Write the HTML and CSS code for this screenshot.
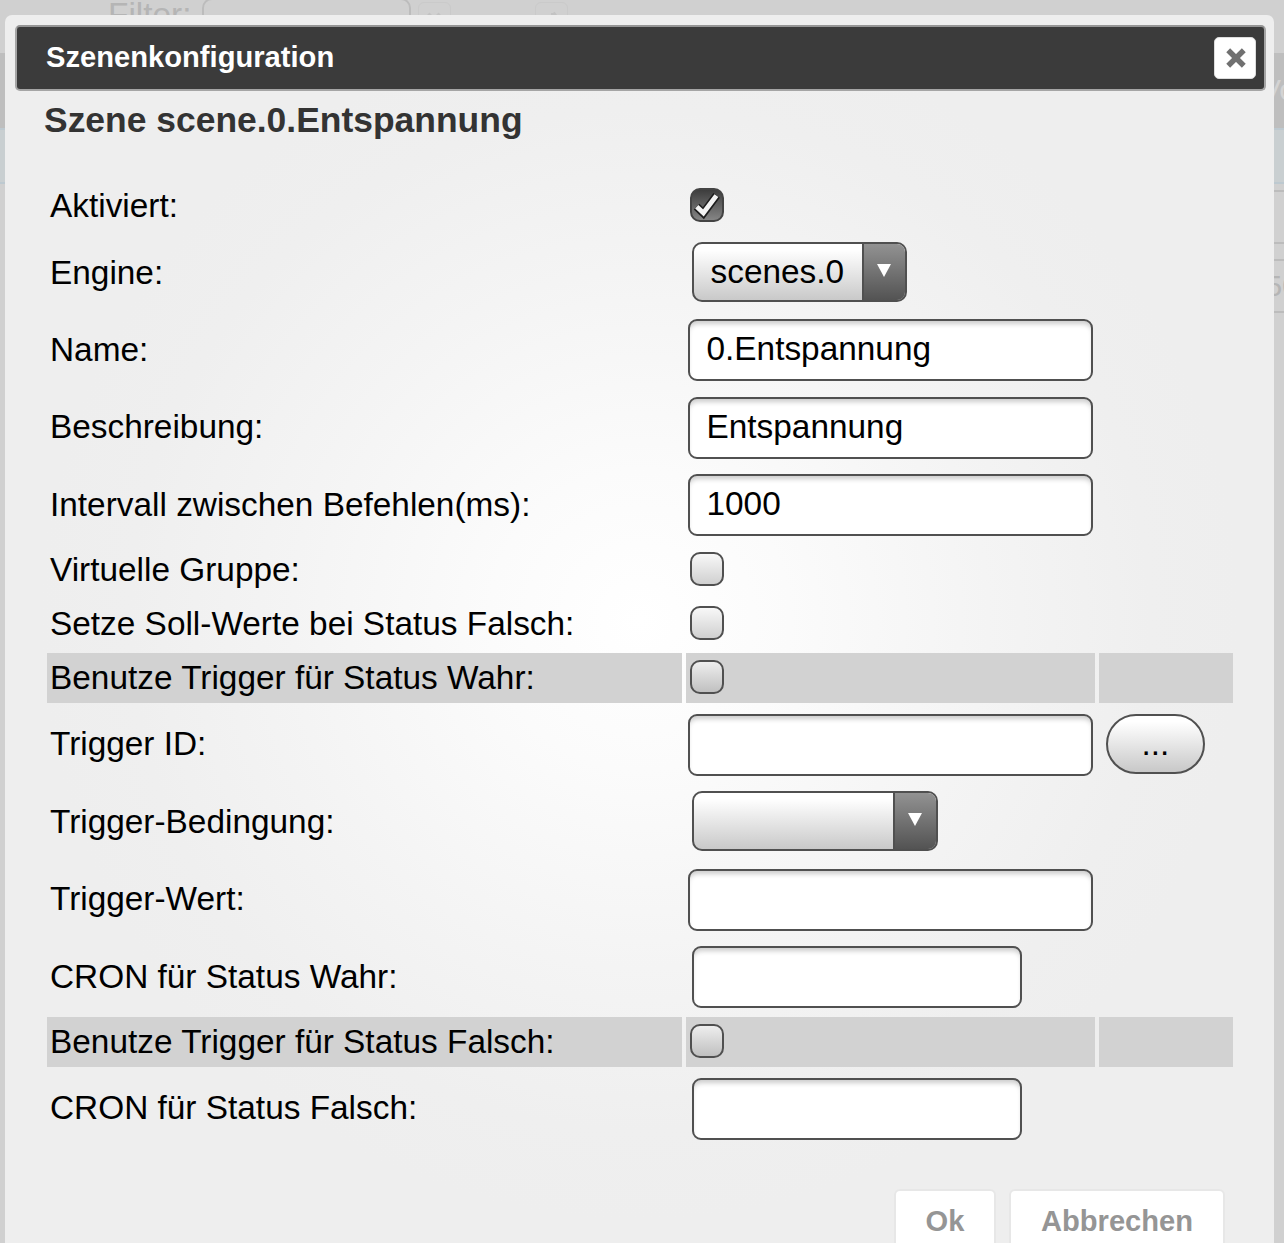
FILE: index.html
```html
<!DOCTYPE html>
<html lang="de">
<head>
<meta charset="utf-8">
<title>Szenenkonfiguration</title>
<link rel="stylesheet" href="styles.css">
</head>
<body>
<div class="backdrop">
  <div class="toolbar"><span class="filter-label">Filter:</span><span class="filter-box"></span><span class="tool-button"><svg viewBox="0 0 20 20"><path d="M4 4L16 16M16 4L4 16"/></svg></span><span class="tool-button second"><svg viewBox="0 0 20 20"><path d="M12 3V14L4 16M12 3L15 7"/></svg></span></div>
  <div class="table-head"><span>Vo</span></div>
  <div class="table-active"></div>
  <div class="side-field"></div>
  <div class="side-field filled">50</div>
</div>
<main class="dialog">
  <header class="titlebar">
    <span>Szenenkonfiguration</span>
    <button class="close" aria-label="Schließen"><svg viewBox="0 0 20 20"><path d="M4 4L16 16M16 4L4 16"/></svg></button>
  </header>
  <h1 class="heading">Szene scene.0.Entspannung</h1>
  <div class="form">
    <div class="row small"><div class="cell"><label>Aktiviert:</label></div><div class="cell"><span class="check checked"><svg viewBox="0 0 34 34"><path class="tick-edge" d="M6.6 18.6L13.4 25.2L26.6 7.4"/><path class="tick" d="M6.8 18.8L13.4 25L26.4 7.6"/></svg></span></div><div class="cell"></div></div>
    <div class="row"><div class="cell"><label>Engine:</label></div><div class="cell"><div class="select engine"><span class="value">scenes.0</span><span class="arrow"><svg viewBox="0 0 14 13"><path d="M0 0H14L7 13Z"/></svg></span></div></div><div class="cell"></div></div>
    <div class="row"><div class="cell"><label>Name:</label></div><div class="cell"><div class="input">0.Entspannung</div></div><div class="cell"></div></div>
    <div class="row"><div class="cell"><label>Beschreibung:</label></div><div class="cell"><div class="input">Entspannung</div></div><div class="cell"></div></div>
    <div class="row"><div class="cell"><label>Intervall zwischen Befehlen(ms):</label></div><div class="cell"><div class="input">1000</div></div><div class="cell"></div></div>
    <div class="row small"><div class="cell"><label>Virtuelle Gruppe:</label></div><div class="cell"><span class="check"></span></div><div class="cell"></div></div>
    <div class="row small"><div class="cell"><label>Setze Soll-Werte bei Status Falsch:</label></div><div class="cell"><span class="check"></span></div><div class="cell"></div></div>
    <div class="row small shaded"><div class="cell"><label>Benutze Trigger für Status Wahr:</label></div><div class="cell"><span class="check"></span></div><div class="cell"></div></div>
    <div class="row"><div class="cell"><label>Trigger ID:</label></div><div class="cell"><div class="input"></div></div><div class="cell"><button class="more">...</button></div></div>
    <div class="row"><div class="cell"><label>Trigger-Bedingung:</label></div><div class="cell"><div class="select condition"><span class="value"></span><span class="arrow"><svg viewBox="0 0 14 13"><path d="M0 0H14L7 13Z"/></svg></span></div></div><div class="cell"></div></div>
    <div class="row"><div class="cell"><label>Trigger-Wert:</label></div><div class="cell"><div class="input"></div></div><div class="cell"></div></div>
    <div class="row"><div class="cell"><label>CRON für Status Wahr:</label></div><div class="cell"><div class="input cron"></div></div><div class="cell"></div></div>
    <div class="row small shaded"><div class="cell"><label>Benutze Trigger für Status Falsch:</label></div><div class="cell"><span class="check"></span></div><div class="cell"></div></div>
    <div class="row"><div class="cell"><label>CRON für Status Falsch:</label></div><div class="cell"><div class="input cron"></div></div><div class="cell"></div></div>
  </div>
  <footer class="actions"><button>Ok</button><button>Abbrechen</button></footer>
</main>
</body>
</html>
```
FILE: styles.css
```css
* { box-sizing: border-box; }
html, body { height: 100%; overflow: hidden; }
body {
  margin: 0;
  padding: 15px 10px 0 5px;
  position: relative;
  background: #d0d0d0;
  font-family: "Liberation Sans", Arial, sans-serif;
}
button { font-family: inherit; margin: 0; padding: 0; }

.backdrop { position: absolute; inset: 0; overflow: hidden; }
.toolbar { height: 53px; display: flex; align-items: flex-start; color: #b5b5b5; }
.filter-label { margin-left: 108px; width: 94px; font-size: 33.4px; line-height: 32px; margin-top: -1px; }
.filter-box { width: 209px; height: 60px; margin-top: -2px; border: 2px solid #bcbcbc; border-radius: 10px; }
.tool-button { width: 33px; height: 33px; margin: 2px 0 0 7px; padding: 7px 5px; border: 1px solid #cacaca; border-radius: 6px; }
.tool-button svg { display: block; width: 20px; height: 20px; fill: none; stroke: #c3c3c3; stroke-width: 4; }
.tool-button.second { margin-left: 84px; }
.table-head { height: 75px; padding: 20px 0 0 1261px; background: #bebebe; color: #d3d3d3; font-size: 30px; white-space: nowrap; }
.table-active { height: 56px; border: 2px solid #bdc9d0; border-width: 2px 0; background: #c9cfd1; }
.side-field { height: 54px; margin: 6px 0 0 1200px; border: 2px solid #bcbcbc; border-width: 2px 0; }
.side-field.filled { margin-top: 15px; padding-left: 66px; font-size: 29px; line-height: 50px; color: #b5b5b5; }

.dialog {
  position: relative;
  height: 1228px;
  padding: 10px 8px 0 10px;
  border-radius: 7px 7px 0 0;
  overflow: hidden;
  background: radial-gradient(circle 600px at 635px 605px, #fff 0%, #fbfbfb 25%, #f4f4f4 58%, #efefef 85%, #eee 100%);
}
.titlebar {
  height: 66px;
  display: flex;
  align-items: center;
  justify-content: space-between;
  padding: 0 8px 0 29px;
  border: 2px solid #a5a5a5;
  border-top-color: #959595;
  border-radius: 5px;
  background: #3b3b3b;
  color: #fff;
  font-size: 29.15px;
  line-height: 33px;
  font-weight: bold;
}
.titlebar span { padding-bottom: 2px; }
.close { width: 42px; height: 42px; border: 1px solid #ddd; border-radius: 5px; background: #fff; display: grid; place-items: center; }
.close svg { width: 26px; height: 26px; margin-left: 1px; fill: none; stroke: #707070; stroke-width: 4.2; }
.heading { margin: 0; height: 90.2px; padding: 9px 0 0 29px; font-size: 35.45px; line-height: 40px; color: #333; }

.form { margin-left: 32px; width: 1186px; display: flex; flex-direction: column; gap: 4px; }
.row { height: 73.35px; flex: none; display: grid; grid-template-columns: 634.5px 409.5px 134px; gap: 4px; }
.row.small { height: 50.2px; }
.cell { display: flex; align-items: center; font-size: 33.38px; }
.row:not(.small) label { padding-top: 1px; }
.shaded .cell { background: #d2d2d2; }
label { padding-left: 3px; white-space: nowrap; }

.input {
  width: 405px;
  height: 62px;
  margin: 2px 0 0 2px;
  padding-left: 17px;
  border: 2px solid #505050;
  border-radius: 9px;
  background: #fff;
  box-shadow: inset 0 5px 5px -2px #ccc;
  line-height: 55px;
}
.input.cron { width: 330px; margin-left: 6px; }
.select { height: 60px; margin-left: 6px; display: flex; border: 2px solid #505050; border-radius: 10px; overflow: hidden; background: linear-gradient(#fff 10%, #c9c9c9); }
.engine { width: 215px; }
.condition { width: 246px; }
.value { flex: 1; padding-left: 17px; line-height: 55px; }
.arrow { width: 43px; border-left: 2px solid #505050; background: linear-gradient(#929292, #535353); display: flex; justify-content: center; padding-top: 20px; }
.arrow svg { width: 14px; height: 13px; fill: #fff; }
.check { width: 34px; height: 34px; margin: -2px 0 0 4.4px; border: 2px solid #505050; border-radius: 10px; background: linear-gradient(#f8f8f8, #d0d0d0); }
.shaded .check { background: linear-gradient(#eee, #c0c0c0); }
.check.checked { background: linear-gradient(#3d3d3d, #858585); border-color: #444; }
.check svg { display: block; width: 34px; height: 34px; margin: -2px; fill: none; }
.tick-edge { stroke: #1d1d1d; stroke-width: 8; }
.tick { stroke: #f3f3f3; stroke-width: 4.8; }
.more { width: 99px; height: 60px; margin-left: 7px; border: 2px solid #505050; border-radius: 30px; background: linear-gradient(#fff 10%, #c8c8c8); font-size: 33.3px; line-height: 54px; color: #000; }

.actions { display: flex; justify-content: flex-end; gap: 13px; margin-top: 44.5px; padding-right: 41px; }
.actions button { width: 102px; height: 66px; border: 2px solid #e7e7e7; border-radius: 6px; background: #fff; color: #959595; font-size: 29.15px; font-weight: bold; }
.actions button:last-child { width: 216px; }
```
